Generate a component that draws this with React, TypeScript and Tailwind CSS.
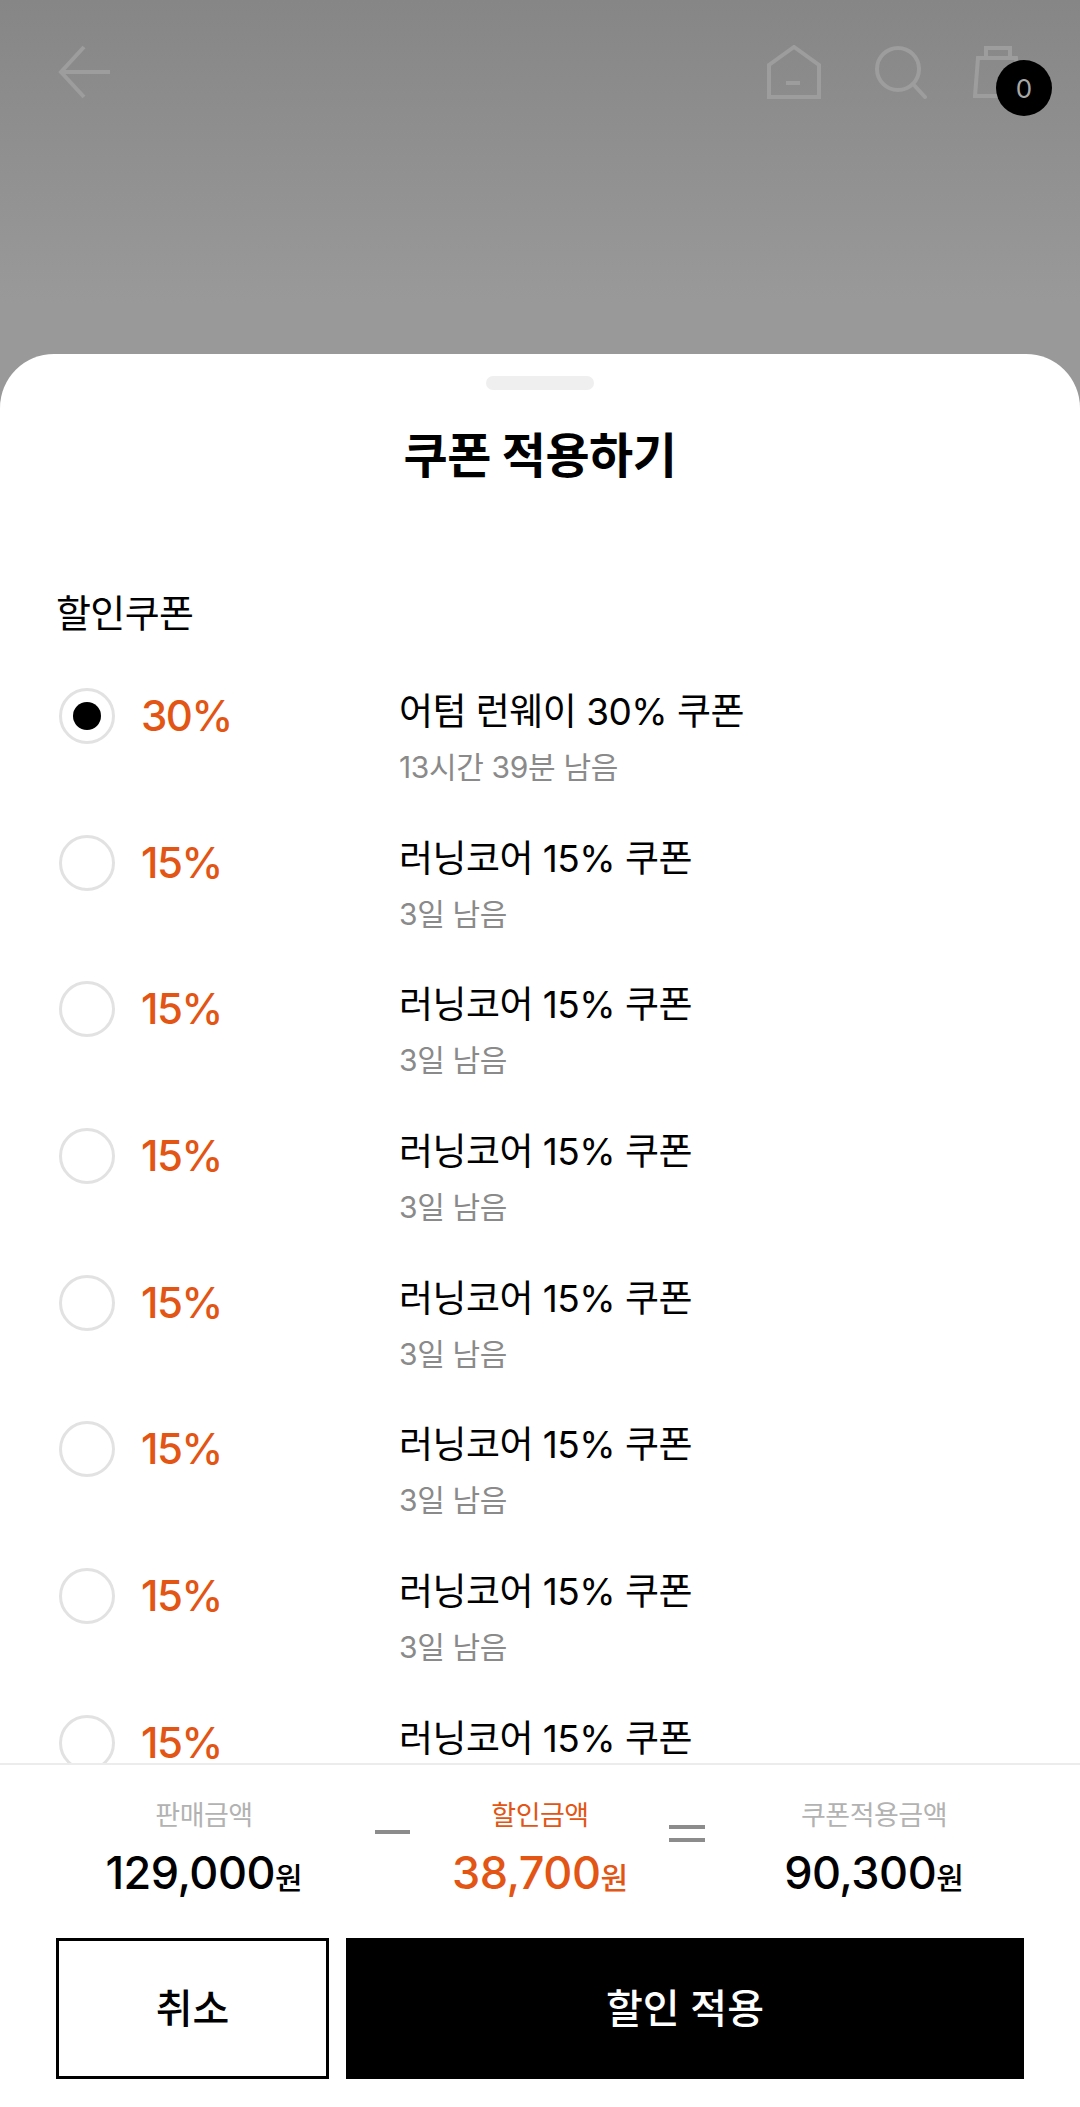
const FONT = "font-['Inter','Noto_Sans_CJK_KR',sans-serif]";

const coupons = [
  { rate: "30%", name: "어텀 런웨이 30% 쿠폰", left: "13시간 39분 남음", selected: true },
  { rate: "15%", name: "러닝코어 15% 쿠폰", left: "3일 남음" },
  { rate: "15%", name: "러닝코어 15% 쿠폰", left: "3일 남음" },
  { rate: "15%", name: "러닝코어 15% 쿠폰", left: "3일 남음" },
  { rate: "15%", name: "러닝코어 15% 쿠폰", left: "3일 남음" },
  { rate: "15%", name: "러닝코어 15% 쿠폰", left: "3일 남음" },
  { rate: "15%", name: "러닝코어 15% 쿠폰", left: "3일 남음" },
  { rate: "15%", name: "러닝코어 15% 쿠폰", left: "3일 남음" },
];

function TopBar() {
  return (
    <header className="flex h-[144px] items-start justify-between pl-[58px] pr-[28px] pt-[45px]">
      <svg width="54" height="54" viewBox="0 0 54 54" fill="none" stroke="#9d9d9d" strokeWidth="4">
        <path d="M26 2 3 27l23 25M3 27h49" />
      </svg>
      <div className="flex items-start">
        <svg width="54" height="54" viewBox="0 0 54 54" fill="none" stroke="#9d9d9d" strokeWidth="4" className="mr-[54px]">
          <path d="M2 52V20L27 2l25 18v32z" />
          <path d="M19 38h14" />
        </svg>
        <svg width="52" height="54" viewBox="0 0 52 54" fill="none" stroke="#9d9d9d" strokeWidth="4" className="mr-[46px]">
          <circle cx="23" cy="24" r="21" />
          <path d="m38 39 12 13" strokeLinecap="round" />
        </svg>
        <div className="relative h-[54px] w-[79px]">
          <svg width="50" height="54" viewBox="0 0 50 54" fill="none" stroke="#9d9d9d" strokeWidth="4">
            <path d="M5 13h38l5 38H2zM13 13V3h24v10" />
          </svg>
          <span className={`absolute right-0 top-[15px] flex size-[56px] items-center justify-center rounded-full bg-black text-[26px] text-[#a8a8a8] ${FONT}`}>
            0
          </span>
        </div>
      </div>
    </header>
  );
}

function CouponRow({ rate, name, left, selected }: (typeof coupons)[number]) {
  return (
    <div className="flex h-[146.7px] shrink-0 items-start">
      <span className="ml-[3px] mt-[9px] flex size-[56px] shrink-0 items-center justify-center rounded-full border-[3px] border-[#e2e2e2]">
        {selected ? <span className="size-[28px] rounded-full bg-black" /> : null}
      </span>
      <span className="mt-[12px] w-[284px] shrink-0 pl-[26px] text-[42px] leading-[50px] font-medium tracking-[-1.5px] text-[#e25514]">
        {rate}
      </span>
      <div className="pt-[11px]">
        <p className="text-[37px] leading-[44px] tracking-[-0.55px] text-black">{name}</p>
        <p className="mt-[14px] text-[30px] leading-[38px] tracking-[-0.35px] text-[#8a8a8a]">{left}</p>
      </div>
    </div>
  );
}

function Amount({ label, value, accent }: { label: string; value: string; accent?: boolean }) {
  return (
    <div className="flex w-[220px] flex-col items-center">
      <span className={`text-[27px] leading-[32px] tracking-[-0.5px] ${accent ? "text-[#e25514]" : "text-[#b2b2b2]"}`}>
        {label}
      </span>
      <span className={`mt-[14px] flex items-baseline text-[45px] leading-[54px] font-medium tracking-[-0.5px] ${accent ? "text-[#e25514]" : "text-black"}`}>
        {value}
        <span className="text-[30px] tracking-normal">원</span>
      </span>
    </div>
  );
}

export default function App() {
  return (
    <div className={`relative h-[2107px] w-[1080px] overflow-hidden bg-gradient-to-b from-[#868686] to-[#999999] to-[300px] ${FONT}`}>
      <TopBar />
      <section className="absolute inset-x-0 bottom-0 top-[354px] flex flex-col rounded-t-[54px] bg-white">
        <div className="mx-auto mt-[22px] h-[14px] w-[108px] shrink-0 rounded-full bg-[#efefef]" />
        <h1 className="mt-[38px] text-center text-[48px] leading-[56px] font-bold tracking-[-0.5px] text-black">쿠폰 적용하기</h1>
        <div className="flex min-h-0 flex-1 flex-col overflow-hidden pl-[56px]">
          <h2 className="mt-[106px] text-[38px] leading-[46px] tracking-[-0.6px] text-black">할인쿠폰</h2>
          <div className="mt-[43px] flex flex-col">
            {coupons.map((c, i) => (
              <CouponRow key={i} {...c} />
            ))}
          </div>
        </div>
        <footer className="shrink-0 border-t-2 border-[#ececec] pb-[28px]">
          <div className="flex items-start pl-[94px] pt-[35px]">
            <Amount label="판매금액" value="129,000" />
            <span className="ml-[61px] mr-[20px] mt-[30px] h-[4px] w-[35px] bg-[#8c8c8c]" />
            <Amount label="할인금액" value="38,700" accent />
            <span className="ml-[19px] mr-[59px] mt-[25px] h-[17px] w-[36px] border-y-[4px] border-[#8c8c8c]" />
            <Amount label="쿠폰적용금액" value="90,300" />
          </div>
          <div className="mt-[33px] flex gap-[17px] px-[56px]">
            <button className="h-[141px] w-[273px] border-[3px] border-black bg-white text-[40px] font-medium text-black">취소</button>
            <button className="h-[141px] flex-1 bg-black text-[40px] font-medium text-white">할인 적용</button>
          </div>
        </footer>
      </section>
    </div>
  );
}
